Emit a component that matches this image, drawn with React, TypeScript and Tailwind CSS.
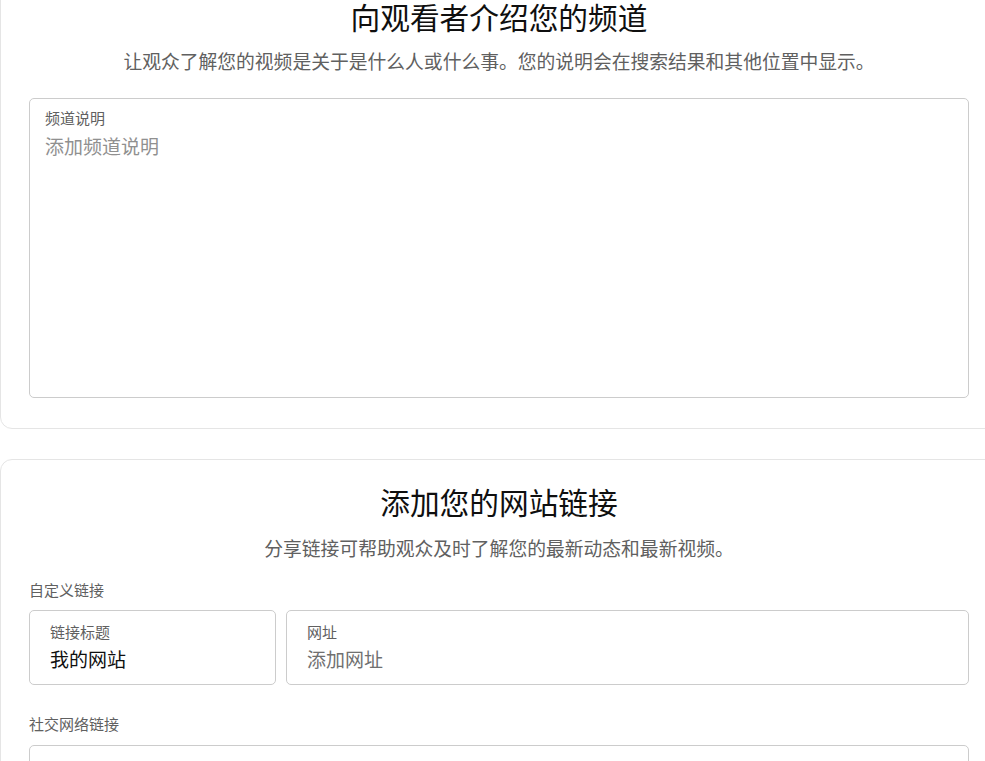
import React from "react";

const font = { fontFamily: '"Noto Sans CJK SC", "Noto Sans", sans-serif' };

export default function App() {
  return (
    <div
      className="w-[985px] h-[761px] overflow-hidden bg-white"
      style={font}
    >
      <div className="w-[998px] -mt-[31px] border border-[#e5e5e5] rounded-xl px-[28px] pt-[29px] pb-[30px]">
        <h1 className="text-center text-[29.7px] leading-[36px] text-[#0f0f0f] font-normal">
          向观看者介绍您的频道
        </h1>
        <p className="mt-[12px] text-center text-[18.8px] leading-[28px] text-[#606060]">
          让观众了解您的视频是关于是什么人或什么事。您的说明会在搜索结果和其他位置中显示。
        </p>
        <div className="mt-[23px] h-[300px] border border-[#cccccc] rounded-[5px] pl-[15px] pt-[9px]">
          <div className="text-[15px] leading-[20px] text-[#606060]">频道说明</div>
          <div className="mt-[5px] text-[19px] leading-[26px] text-[#909090]">添加频道说明</div>
        </div>
      </div>

      <div className="w-[998px] mt-[30px] border border-[#e5e5e5] rounded-xl px-[28px] pt-[24px] pb-[30px]">
        <h2 className="text-center text-[29.7px] leading-[36px] text-[#0f0f0f] font-normal">
          添加您的网站链接
        </h2>
        <p className="mt-[14px] text-center text-[18.8px] leading-[28px] text-[#606060]">
          分享链接可帮助观众及时了解您的最新动态和最新视频。
        </p>
        <div className="mt-[18px] text-[15px] leading-[20px] text-[#606060]">自定义链接</div>
        <div className="mt-[10px] flex gap-[10px]">
          <div className="w-[247px] h-[75px] border border-[#cccccc] rounded-[5px] pl-[20px] pt-[11px]">
            <div className="text-[15px] leading-[20px] text-[#606060]">链接标题</div>
            <div className="mt-[4px] text-[19px] leading-[26px] text-[#0f0f0f]">我的网站</div>
          </div>
          <div className="flex-1 h-[75px] border border-[#cccccc] rounded-[5px] pl-[20px] pt-[11px]">
            <div className="text-[15px] leading-[20px] text-[#606060]">网址</div>
            <div className="mt-[4px] text-[19px] leading-[26px] text-[#707070]">添加网址</div>
          </div>
        </div>
        <div className="mt-[29px] text-[15px] leading-[20px] text-[#606060]">社交网络链接</div>
        <div className="mt-[11px] h-[75px] border border-[#cccccc] rounded-[5px]" />
      </div>
    </div>
  );
}
